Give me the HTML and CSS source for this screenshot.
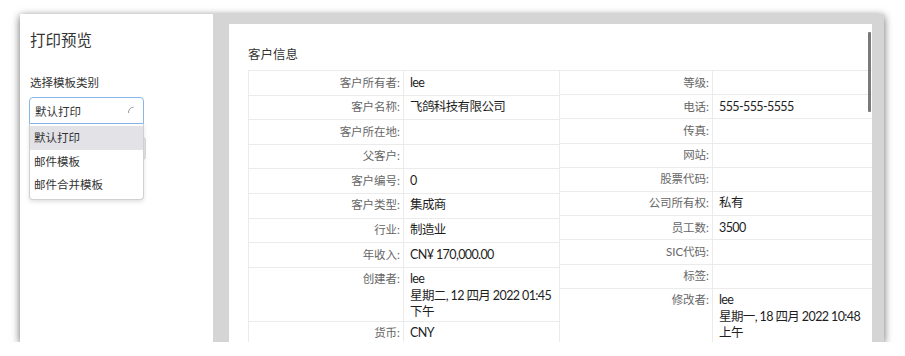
FILE: index.html
```html
<!DOCTYPE html>
<html lang="zh-CN">
<head>
  <meta charset="UTF-8">
  <meta name="viewport" content="width=device-width, initial-scale=1.0">
  <title>打印预览</title>
  <link rel="stylesheet" href="styles.css">
</head>
<body>
  <div class="window">
    <!-- 왼쪽: 템플릿 선택 -->
    <aside class="side">
      <h2>打印预览</h2>
      <p class="lbl">选择模板类别</p>
      <div class="picker">
        <div class="select">
          <span>默认打印</span>
          <svg class="spin" width="8" height="8" viewBox="0 0 8 8"><path d="M6.5 1.2 A5 5 0 0 0 1.6 7" fill="none" stroke="#999" stroke-width="1"/></svg>
        </div>
        <div class="btn-under"></div>
        <ul class="drop">
          <li class="on">默认打印</li>
          <li>邮件模板</li>
          <li>邮件合并模板</li>
        </ul>
      </div>
    </aside>

    <!-- 오른쪽: 미리보기 -->
    <section class="main">
      <div class="page">
        <h3>客户信息</h3>
        <div class="info">
          <div class="col left">
            <div class="row"><span class="k">客户所有者:</span><span class="v">lee</span></div>
            <div class="row"><span class="k">客户名称:</span><span class="v">飞鸽科技有限公司</span></div>
            <div class="row"><span class="k">客户所在地:</span><span class="v"></span></div>
            <div class="row"><span class="k">父客户:</span><span class="v"></span></div>
            <div class="row"><span class="k">客户编号:</span><span class="v">0</span></div>
            <div class="row"><span class="k">客户类型:</span><span class="v">集成商</span></div>
            <div class="row"><span class="k">行业:</span><span class="v">制造业</span></div>
            <div class="row"><span class="k">年收入:</span><span class="v">CN¥ 170,000.00</span></div>
            <div class="row"><span class="k">创建者:</span><span class="v">lee<br>星期二, 12 四月 2022 01:45 下午</span></div>
            <div class="row"><span class="k">货币:</span><span class="v">CNY</span></div>
          </div>
          <div class="col right">
            <div class="row"><span class="k">等级:</span><span class="v"></span></div>
            <div class="row"><span class="k">电话:</span><span class="v">555-555-5555</span></div>
            <div class="row"><span class="k">传真:</span><span class="v"></span></div>
            <div class="row"><span class="k">网站:</span><span class="v"></span></div>
            <div class="row"><span class="k">股票代码:</span><span class="v"></span></div>
            <div class="row"><span class="k">公司所有权:</span><span class="v">私有</span></div>
            <div class="row"><span class="k">员工数:</span><span class="v">3500</span></div>
            <div class="row"><span class="k">SIC代码:</span><span class="v"></span></div>
            <div class="row"><span class="k">标签:</span><span class="v"></span></div>
            <div class="row"><span class="k">修改者:</span><span class="v">lee<br>星期一, 18 四月 2022 10:48 上午</span></div>
          </div>
        </div>
        <div class="scroll"></div>
      </div>
    </section>
  </div>
</body>
</html>
```

FILE: styles.css
```css
* {margin:0; padding:0; box-sizing:border-box;}
ul,li{ list-style:none; }

body{
  background:#fff;
  font-family: Lato, "Noto Sans CJK SC", sans-serif;
  color:#222;
}

.window{
  margin:14px 0 0 20px;
  width:864px;
  height:328px;
  display:flex;
  overflow:hidden;
  box-shadow: 0 2px 8px rgba(0,0,0,0.6);
}

/* 왼쪽 패널 */
.side{
  width:193px;
  background:#fff;
  padding:14px 0 0 9px;
}

.side h2{
  font-size:15.5px;
  font-weight:normal;
  line-height:24px;
  color:#333;
  padding-left:1px;
}

.side .lbl{
  font-size:11.5px;
  line-height:20px;
  color:#333;
  margin-top:21px;
  padding-left:1px;
}

.picker{
  position:relative;
  margin-top:4px;
  width:117px;
}

.select{
  width:115px;
  height:27px;
  border:1px solid #86b6ea;
  border-radius:4px 4px 0 0;
  display:flex;
  align-items:center;
  justify-content:space-between;
  padding:0 8px 0 5px;
  font-size:11.5px;
  color:#333;
}

.spin{ margin-top:-2px; }

.btn-under{
  margin-top:13px;
  width:117px;
  height:23px;
  background:#e6e6e6;
  border:1px solid #ddd;
  border-radius:3px;
}

.drop{
  position:absolute;
  top:27px;
  left:0;
  width:115px;
  background:#fff;
  border:1px solid #d0d0d0;
  border-top:none;
  border-radius:0 0 4px 4px;
  box-shadow:0 2px 4px rgba(0,0,0,0.12);
  padding:2px 0 2px;
}

.drop > li{
  font-size:11.5px;
  color:#333;
  height:23.5px;
  line-height:23.5px;
  padding-left:4px;
}

.drop > li.on{
  background:#e2e2e7;
}

/* 오른쪽 미리보기 */
.main{
  flex:1;
  background:#d5d5d5;
  padding:10px 12px 0 16px;
  overflow:hidden;
}

.page{
  position:relative;
  background:#fff;
  height:100%;
  padding:21px 0 0 19px;
  overflow:hidden;
}

.page h3{
  font-size:12.5px;
  font-weight:normal;
  line-height:20px;
  color:#333;
  margin-bottom:5px;
}

.info{
  display:flex;
  border-top:1px solid #ebebeb;
  border-left:1px solid #ebebeb;
}

.col.left .row{ grid-template-columns:155px 156px; min-height:24.6px; }
.col.right .row{ grid-template-columns:153px 160px; min-height:24.2px; }

.row{
  display:grid;
}

.row > span{
  border-right:1px solid #ebebeb;
  border-bottom:1px solid #ebebeb;
  line-height:16.5px;
  padding-top:3.5px;
}

.k{
  text-align:right;
  font-size:11.5px;
  color:#666;
  padding-right:3px;
}

.v{
  font-size:12.5px;
  letter-spacing:-0.6px;
  color:#1e1e1e;
  padding-left:6px;
  padding-right:4px;
}

.scroll{
  position:absolute;
  top:8px;
  right:1px;
  width:3px;
  height:80px;
  background:#7a7a7a;
  border-radius:1px;
}
```
